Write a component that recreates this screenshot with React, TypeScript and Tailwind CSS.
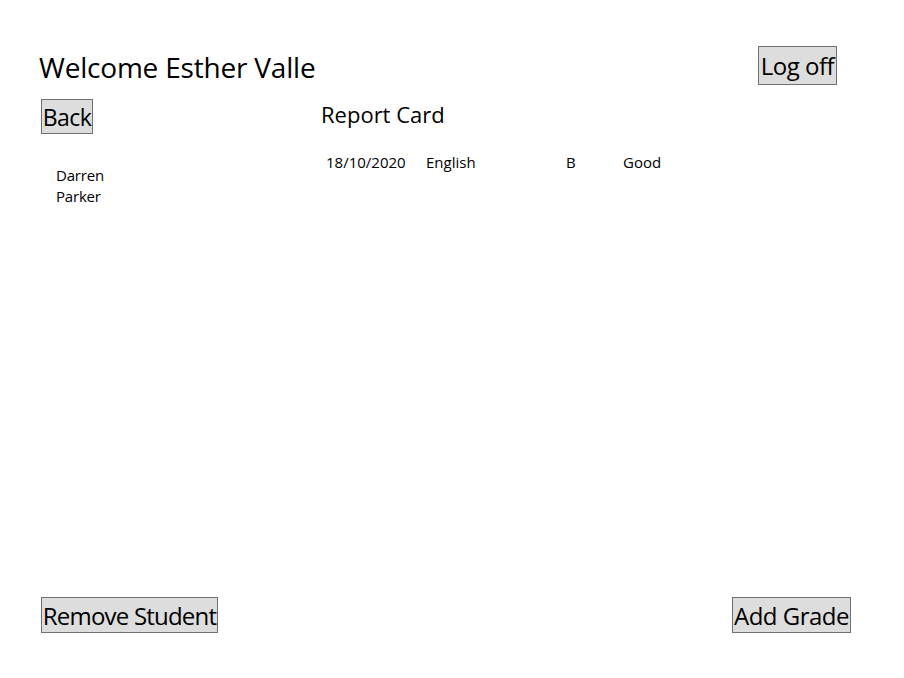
import React from "react";

const font = { fontFamily: '"Open Sans", "Noto Sans", sans-serif' };

function WinButton({ children, className = "" }: { children: React.ReactNode; className?: string }) {
  return (
    <button
      className={`bg-[#dddddd] border border-[#707070] text-[#000] leading-none whitespace-nowrap flex items-center justify-center ${className}`}
    >
      {children}
    </button>
  );
}

export default function App() {
  return (
    <div className="w-[904px] h-[678px] bg-white text-black flex flex-col" style={font}>
      {/* Header */}
      <div className="flex items-start justify-between pt-[46px] pl-[39px] pr-[67px]">
        <h1 className="text-[28px] leading-none mt-[7px] tracking-[-0.2px]">Welcome Esther Valle</h1>
        <WinButton className="w-[79px] h-[39px] text-[24px] tracking-[-0.5px]">Log off</WinButton>
      </div>

      {/* Back + title */}
      <div className="flex items-start pl-[41px] mt-[14px]">
        <WinButton className="w-[52px] h-[35px] text-[23px] tracking-[-0.5px] pt-[2px]">Back</WinButton>
        <h2 className="ml-[228px] mt-[4px] text-[22px] leading-none">Report Card</h2>
      </div>

      {/* Content */}
      <div className="flex flex-1 text-[15px]">
        <div className="w-[326px] shrink-0 pl-[56px] pt-[31px] leading-[21px] tracking-[-0.2px]">
          <div>Darren</div>
          <div>Parker</div>
        </div>
        <div className="pt-[18px]">
          <div className="flex leading-[20px]">
            <span className="w-[100px]">18/10/2020</span>
            <span className="w-[140px]">English</span>
            <span className="w-[57px]">B</span>
            <span>Good</span>
          </div>
        </div>
      </div>

      {/* Footer */}
      <div className="flex items-start justify-between pl-[41px] pr-[53px] pb-[45px]">
        <WinButton className="w-[177px] h-[36px] text-[24px] tracking-[-0.8px] pt-[2px]">Remove Student</WinButton>
        <WinButton className="w-[119px] h-[36px] text-[24px] tracking-[-0.5px] pt-[2px]">Add Grade</WinButton>
      </div>
    </div>
  );
}
